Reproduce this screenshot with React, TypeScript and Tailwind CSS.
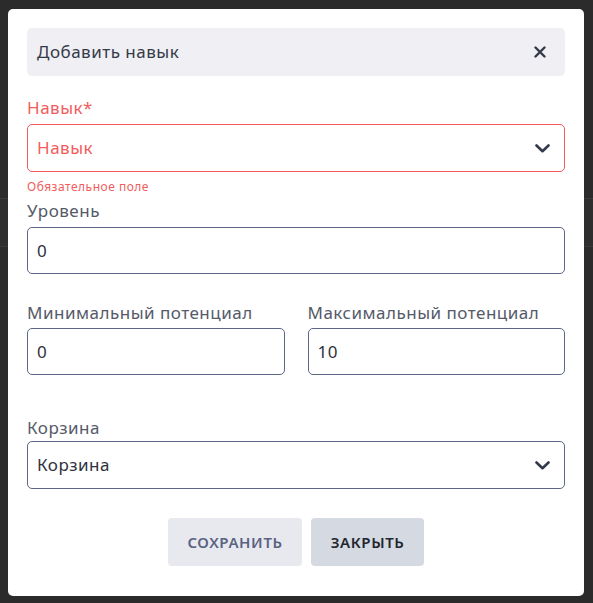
function Chevron() {
  return (
    <svg width="15" height="9" viewBox="0 0 15 9" fill="none" className="text-[#333a4d]">
      <polyline points="1.5,1.5 7.5,7.2 13.5,1.5" stroke="currentColor" strokeWidth="2.6" strokeLinecap="round" strokeLinejoin="round" />
    </svg>
  );
}

function Label({ text, error }: { text: string; error?: boolean }) {
  return (
    <div className={`text-[17px] leading-[24px] tracking-[0.5px] ${error ? 'text-[#f25c5c]' : 'text-[#555a69]'}`}>
      {text}
    </div>
  );
}

function TextInput({ value }: { value: string }) {
  return (
    <div className="h-[47px] flex items-center px-[9px] border border-[#5d6686] rounded-[5px] text-[17px] tracking-[0.5px] text-[#2f323c]">
      {value}
    </div>
  );
}

function SelectBox({ value, error }: { value: string; error?: boolean }) {
  return (
    <div
      className={`h-[48px] flex items-center justify-between pl-[9px] pr-[14px] border rounded-[5px] text-[17px] tracking-[0.5px] ${
        error ? 'border-[#f25c5c] text-[#f25c5c]' : 'border-[#5d6686] text-[#2f323c]'
      }`}
    >
      <span>{value}</span>
      <Chevron />
    </div>
  );
}

export default function App() {
  return (
    <div className="relative min-h-[603px] bg-[#2b2b2b] font-['Noto_Sans',sans-serif]">
      {/* page behind the overlay */}
      <div className="pt-[198px]">
        <div className="h-[49px] border-y border-[#3a3a3a] bg-[#2e2e2e]" />
      </div>

      {/* Modal */}
      <div className="absolute left-[8px] top-[9px] w-[576px] bg-white rounded-[5px] px-[19px] pt-[19px] pb-[30px]">
        {/* Header */}
        <div className="h-[48px] flex items-center justify-between pl-[10px] pr-[19px] bg-[#efeff4] rounded-[5px]">
          <span className="text-[17px] tracking-[0.5px] text-[#353a48]">Добавить навык</span>
          <svg width="12" height="12" viewBox="0 0 12 12" fill="none" className="text-[#353a48]">
            <path d="M1.5 1.5 10.5 10.5M10.5 1.5 1.5 10.5" stroke="currentColor" strokeWidth="2.4" strokeLinecap="round" />
          </svg>
        </div>

        <div className="mt-[20px]">
          <Label text="Навык*" error />
          <div className="mt-[4px]">
            <SelectBox value="Навык" error />
          </div>
          <div className="mt-[7px] text-[12px] leading-[16px] tracking-[0.5px] text-[#f25c5c]">Обязательное поле</div>
        </div>

        <div className="mt-[4px]">
          <Label text="Уровень" />
          <div className="mt-[4px]">
            <TextInput value="0" />
          </div>
        </div>

        <div className="mt-[27px] grid grid-cols-2 gap-[23px]">
          <div>
            <Label text="Минимальный потенциал" />
            <div className="mt-[3px]">
              <TextInput value="0" />
            </div>
          </div>
          <div>
            <Label text="Максимальный потенциал" />
            <div className="mt-[3px]">
              <TextInput value="10" />
            </div>
          </div>
        </div>

        <div className="mt-[41px]">
          <Label text="Корзина" />
          <div className="mt-[1px]">
            <SelectBox value="Корзина" />
          </div>
        </div>

        <div className="mt-[29px] flex justify-center gap-[9px]">
          <button className="h-[48px] w-[134px] rounded-[4px] bg-[#e8e9ef] text-[15px] font-semibold tracking-[0.6px] text-[#5b6382]">
            СОХРАНИТЬ
          </button>
          <button className="h-[48px] w-[113px] rounded-[4px] bg-[#d5d9e2] text-[15px] font-semibold tracking-[0.6px] text-[#23262f]">
            ЗАКРЫТЬ
          </button>
        </div>
      </div>
    </div>
  );
}
